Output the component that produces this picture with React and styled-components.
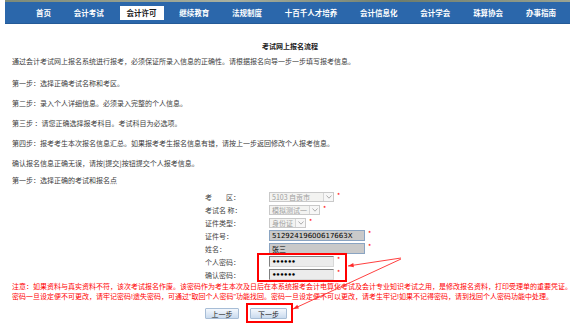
import React from "react";
import styled, { createGlobalStyle } from "styled-components";

const Global = createGlobalStyle`
  body {
    margin: 0;
    background: #fff;
    font-family: "Noto Sans CJK SC", "Liberation Sans", sans-serif;
  }
`;

const Page = styled.div`
  position: relative;
  width: 580px;
  height: 328px;
  overflow: hidden;
`;

const TopStrip = styled.div`
  height: 2px;
  margin-left: 5px;
  width: 565px;
  background: linear-gradient(90deg, #7d8a78, #a9b0a0 40%, #6f7d6c 70%, #9aa392);
`;

const NavBar = styled.div`
  display: flex;
  align-items: center;
  justify-content: space-between;
  margin-left: 5px;
  width: 565px;
  height: 22px;
  box-sizing: border-box;
  padding: 0 7px 0 24px;
  background: #2b67ab;
  border-bottom: 1px solid #245a97;
`;

const NavItem = styled.span`
  display: flex;
  align-items: center;
  height: 14px;
  padding: 0 7px;
  font-size: 7.5px;
  font-weight: 700;
  white-space: nowrap;
  color: ${(p) => (p.$active ? "#1a1a1a" : "#fff")};
  background: ${(p) => (p.$active ? "#fff" : "transparent")};
`;

const Content = styled.div`
  padding: 17px 0 0 12px;
  color: #3c3c3c;
  font-size: 7px;
  line-height: 10px;
`;

const Title = styled.div`
  height: 10px;
  padding-right: 12px;
  text-align: center;
  font-weight: 700;
  color: #222;
`;

const Para = styled.div`
  height: 10px;
  margin-top: ${(p) => p.$mt}px;
  white-space: nowrap;
`;

const Form = styled.div`
  margin-top: 5px;
  padding-left: 193px;
  display: grid;
  grid-template-columns: 64px auto;
  grid-auto-rows: 13px;
  align-items: center;
`;

const Label = styled.span`
  color: #444;
  white-space: pre;
`;

const Field = styled.span`
  display: flex;
  align-items: flex-start;
  gap: 3px;
`;

const Star = styled.span`
  color: #f00;
  font-size: 7px;
  line-height: 7px;
`;

const SelectBox = styled.span`
  display: flex;
  align-items: stretch;
  width: ${(p) => p.$w}px;
  height: 10px;
  box-sizing: border-box;
  border: 1px solid #c9c9c9;
  background: #f3f3f1;
  color: #a0a0a0;
  font-size: 7px;
  line-height: 8px;
  overflow: hidden;
`;

const SelectText = styled.span`
  flex: 1;
  padding-left: 2px;
  white-space: nowrap;
  overflow: hidden;
`;

const SelectArrow = styled.span`
  width: 9px;
  display: flex;
  align-items: center;
  justify-content: center;
  border-left: 1px solid #d6d6d6;
  background: #f7f7f7;
`;

const TextInput = styled.span`
  display: flex;
  align-items: center;
  width: ${(p) => p.$w}px;
  height: 11px;
  box-sizing: border-box;
  padding-left: 2px;
  border: 1px solid #8aa4c2;
  background: ${(p) => (p.$pwd ? "#ececec" : "#c9c9c9")};
  border-color: ${(p) => (p.$pwd ? "#808080 #d8d8d8 #d8d8d8 #808080" : "#8aa4c2")};
  color: #000;
  font-family: "DejaVu Sans", sans-serif;
  font-size: 7px;
  white-space: nowrap;
`;

const Dots = styled.span`
  font-weight: 700;
  letter-spacing: -0.6px;
  font-size: 7px;
`;

const NameText = styled.span`
  font-family: "Noto Sans CJK SC", sans-serif;
`;

const Notice = styled.div`
  margin-top: 0;
  color: #f00;
  font-size: 7px;
  line-height: 10px;
  white-space: nowrap;
`;

const Half = styled.span`
  font-family: "Liberation Sans", sans-serif;
`;

const ButtonRow = styled.div`
  display: flex;
  gap: 11px;
  margin-top: 6px;
  padding-left: 193px;
`;

const Button = styled.span`
  display: flex;
  align-items: center;
  justify-content: center;
  width: ${(p) => p.$w}px;
  height: 11px;
  box-sizing: border-box;
  border: 1px solid #a7bdd6;
  border-radius: 1px;
  background: linear-gradient(180deg, #f4f8fd 0%, #dde8f5 55%, #c9daee 100%);
  color: #222;
  font-size: 7px;
`;

const Overlay = styled.svg`
  position: absolute;
  left: 0;
  top: 0;
  pointer-events: none;
`;

const navItems = [
  "首页",
  "会计考试",
  "会计许可",
  "继续教育",
  "法规制度",
  "十百千人才培养",
  "会计信息化",
  "会计学会",
  "珠算协会",
  "办事指南",
];

const paras = [
  ["通过会计考试网上报名系统进行报考，必须保证所录入信息的正确性。请根据报名向导一步一步填写报考信息。", 5],
  ["第一步：选择正确考试名称和考区。", 12],
  ["第二步：录入个人详细信息。必须录入完整的个人信息。", 10],
  ["第三步 ：请您正确选择报考科目。考试科目为必选项。", 10],
  ["第四步：报考考生本次报名信息汇总。如果报考考生报名信息有错，请按上一步返回修改个人报考信息。", 10],
  ["确认报名信息正确无误，请按[提交]按钮提交个人报考信息。", 10],
  ["第一步：选择正确的考试和报名点", 7],
];

function Chevron() {
  return (
    <svg width="6" height="4" viewBox="0 0 6 4">
      <path d="M0.5 0.5 L3 3.2 L5.5 0.5" fill="none" stroke="#9a9a9a" strokeWidth="0.8" />
    </svg>
  );
}

function Select({ w, children }) {
  return (
    <SelectBox $w={w}>
      <SelectText>{children}</SelectText>
      <SelectArrow>
        <Chevron />
      </SelectArrow>
    </SelectBox>
  );
}

function Arrow({ x1, y1, x2, y2 }) {
  const a = Math.atan2(y2 - y1, x2 - x1);
  const len = 6;
  const spread = 0.35;
  const p1 = [x2 - len * Math.cos(a - spread), y2 - len * Math.sin(a - spread)];
  const p2 = [x2 - len * Math.cos(a + spread), y2 - len * Math.sin(a + spread)];
  return (
    <g>
      <line x1={x1} y1={y1} x2={x2} y2={y2} stroke="#ff2a2a" strokeWidth="0.9" />
      <polygon points={`${x2},${y2} ${p1[0]},${p1[1]} ${p2[0]},${p2[1]}`} fill="#ff2a2a" />
    </g>
  );
}

export default function App() {
  return (
    <Page>
      <Global />
      <TopStrip />
      <NavBar>
        {navItems.map((n) => (
          <NavItem key={n} $active={n === "会计许可"}>
            {n}
          </NavItem>
        ))}
      </NavBar>
      <Content>
        <Title>考试网上报名流程</Title>
        {paras.map(([t, mt], i) => (
          <Para key={i} $mt={mt}>
            {t}
          </Para>
        ))}
        <Form>
          <Label>{"考　　区："}</Label>
          <Field>
            <Select w={65}>5103 自贡市</Select>
            <Star>*</Star>
          </Field>
          <Label>{"考试名 称："}</Label>
          <Field>
            <Select w={51}>模拟测试一</Select>
            <Star>*</Star>
          </Field>
          <Label>证件类型：</Label>
          <Field>
            <Select w={37}>身份证</Select>
            <Star>*</Star>
          </Field>
          <Label>证件号：</Label>
          <Field>
            <TextInput $w={96}>51292419600617663X</TextInput>
            <Star>*</Star>
          </Field>
          <Label>姓名：</Label>
          <Field>
            <TextInput $w={96}>
              <NameText>张三</NameText>
            </TextInput>
            <Star>*</Star>
          </Field>
          <Label>个人密码：</Label>
          <Field>
            <TextInput $w={65} $pwd>
              <Dots>••••••</Dots>
            </TextInput>
            <Star>*</Star>
          </Field>
          <Label>确认密码：</Label>
          <Field>
            <TextInput $w={65} $pwd>
              <Dots>••••••</Dots>
            </TextInput>
            <Star>*</Star>
          </Field>
        </Form>
        <Notice>
          注意：如果资料与真实资料不符，该次考试报名作废。该密码作为考生本次及日后在本系统报考会计电算化考试及会计专业知识考试之用，是修改报名资料，打印受理单的重要凭证。
        </Notice>
        <Notice>
          密码一旦设定便不可更改，请牢记密码<Half>!</Half>遗失密码，可通过<Half>"</Half>取回个人密码
          <Half>"</Half>功能找回。密码一旦设定便不可以更改，请考生牢记<Half>!</Half>
          如果不记得密码，请到找回个人密码功能中处理。
        </Notice>
        <ButtonRow>
          <Button $w={34}>上一步</Button>
          <Button $w={37}>下一步</Button>
        </ButtonRow>
      </Content>
      <Overlay width="580" height="328" viewBox="0 0 580 328">
        <rect x="258" y="254" width="88" height="27" fill="none" stroke="#f00" strokeWidth="2" />
        <rect x="247" y="304" width="45" height="18" fill="none" stroke="#f00" strokeWidth="2" />
        <Arrow x1={401} y1={258} x2={348} y2={266} />
        <Arrow x1={401} y1={259} x2={293} y2={309} />
      </Overlay>
    </Page>
  );
}
